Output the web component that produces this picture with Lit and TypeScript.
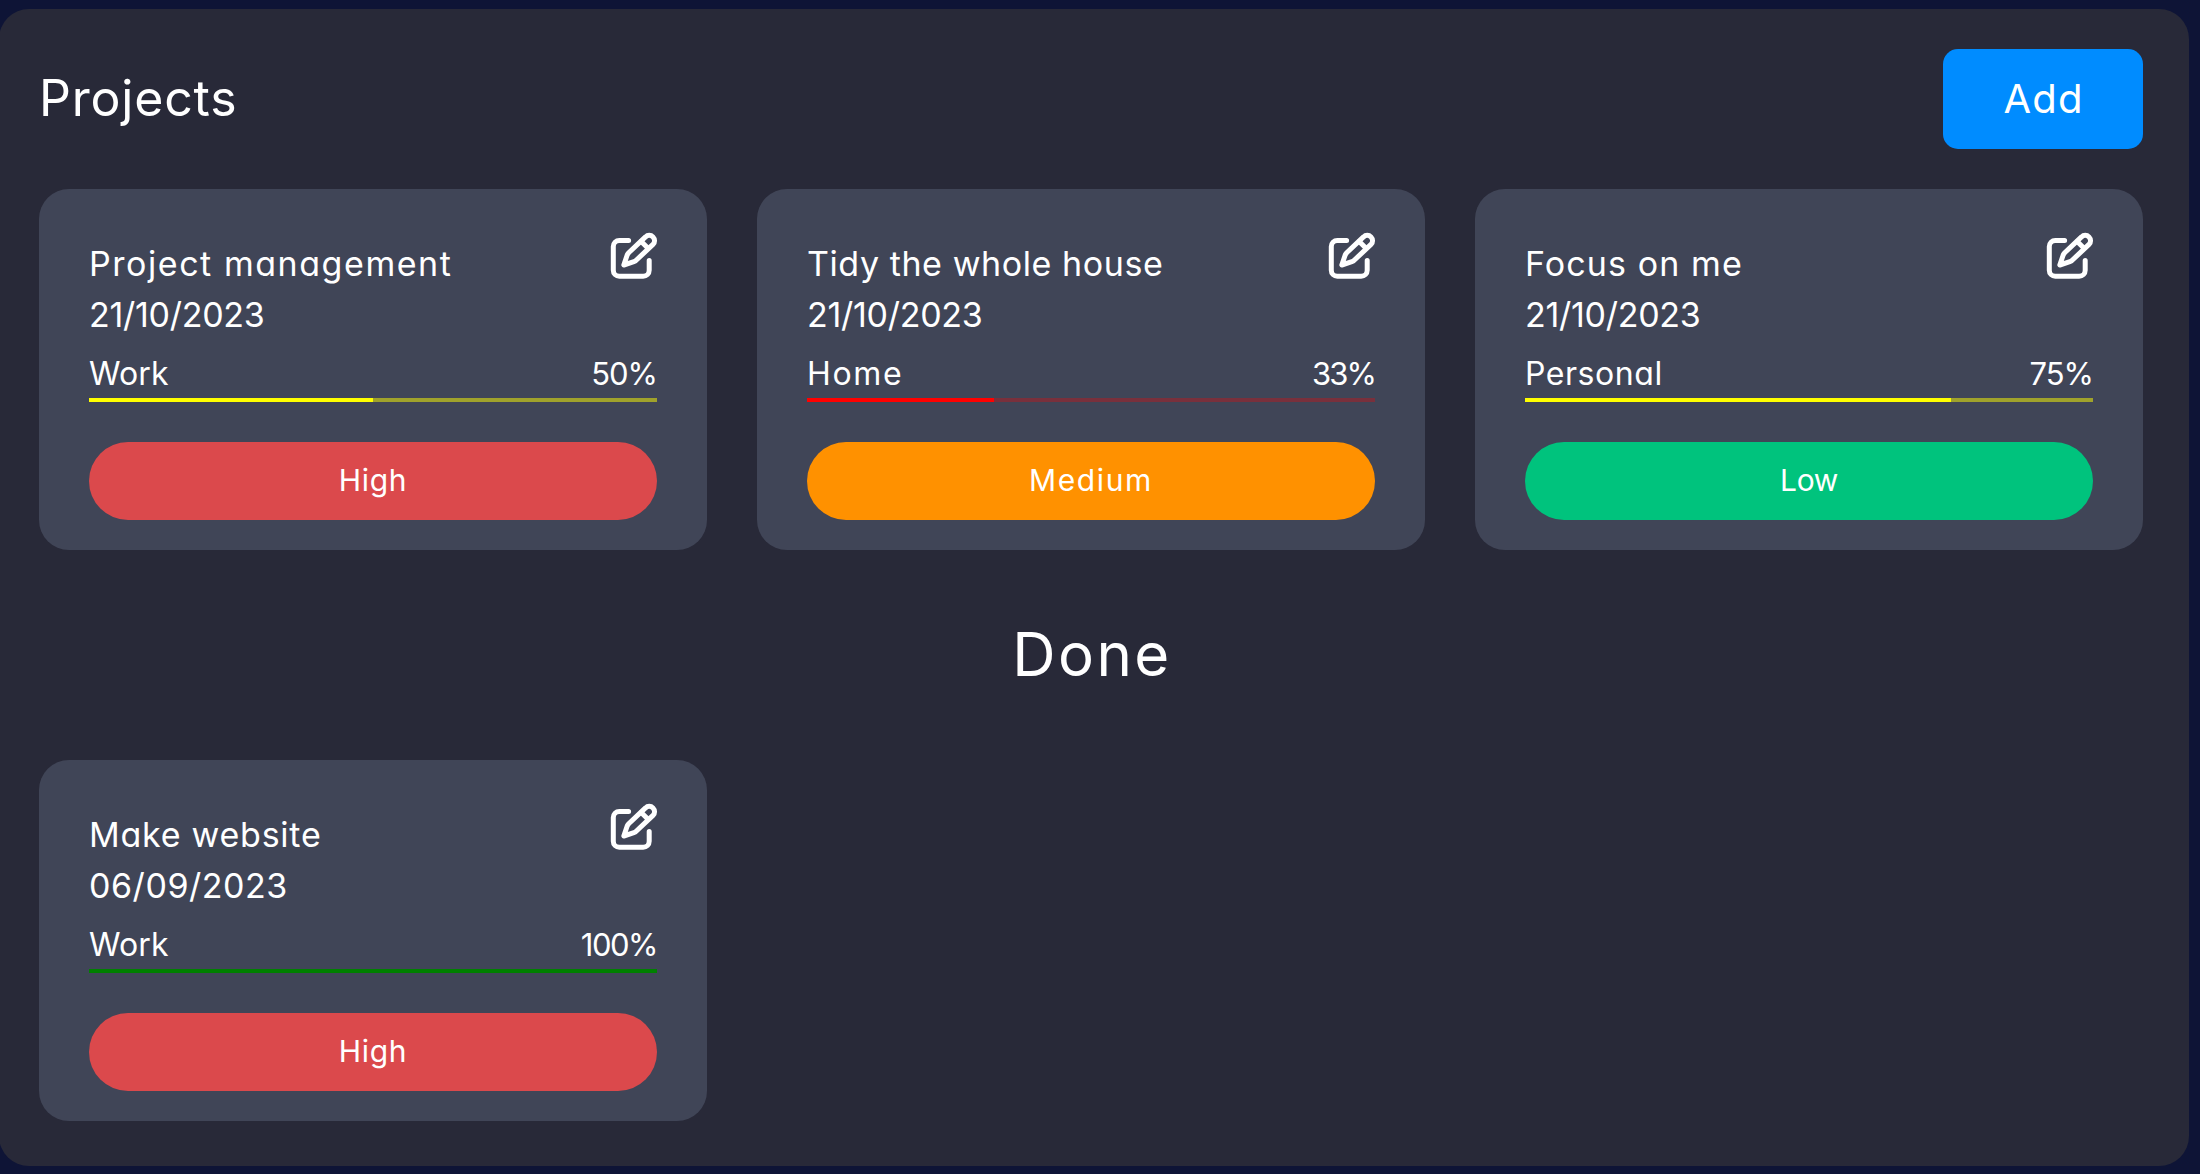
import { LitElement, html, css } from 'lit';
import { customElement, property } from 'lit/decorators.js';
import { classMap } from 'lit/directives/class-map.js';
import { styleMap } from 'lit/directives/style-map.js';

/** A string with the letter spacing (px) it is set in. */
interface Label {
  text: string;
  tracking: number;
}

interface Project {
  title: Label;
  date: Label;
  category: Label;
  progress: number;
  progressTracking: number;
  priority: 'High' | 'Medium' | 'Low';
}

const label = (text: string, tracking: number): Label => ({ text, tracking });

const WORK = label('Work', 0.1);
const OCTOBER = label('21/10/2023', -0.27);

const ACTIVE: Project[] = [
  {
    title: label('Project management', 1.55),
    date: OCTOBER,
    category: WORK,
    progress: 50,
    progressTracking: -1,
    priority: 'High',
  },
  {
    title: label('Tidy the whole house', 0.58),
    date: OCTOBER,
    category: label('Home', 1.7),
    progress: 33,
    progressTracking: -1.91,
    priority: 'Medium',
  },
  {
    title: label('Focus on me', 1.1),
    date: OCTOBER,
    category: label('Personal', 0.55),
    progress: 75,
    progressTracking: -1.05,
    priority: 'Low',
  },
];

const DONE: Project[] = [
  {
    title: label('Make website', 0.75),
    date: label('06/09/2023', 0.54),
    category: WORK,
    progress: 100,
    progressTracking: -1.5,
    priority: 'High',
  },
];

const tracked = (value: number) => styleMap({ letterSpacing: `${value}px` });

@customElement('project-card')
export class ProjectCard extends LitElement {
  @property({ attribute: false }) project!: Project;

  static styles = css`
    :host {
      display: block;
      box-sizing: border-box;
      height: 361px;
      padding: 44px 50px 30px;
      border-radius: 30px;
      background: #404557;
      color: #fff;
    }
    .top {
      display: flex;
      justify-content: space-between;
      align-items: flex-start;
      height: 107px;
    }
    .heading {
      padding-top: 5px;
      font-size: 34px;
      line-height: 51px;
      white-space: nowrap;
    }
    .icon {
      display: block;
      width: 46px;
      height: 46px;
      overflow: visible;
    }
    .meta {
      display: flex;
      justify-content: space-between;
      margin-top: 9px;
      font-size: 32px;
      line-height: 49px;
    }
    .percent {
      font-size: 31px;
    }
    .track,
    .fill {
      height: 4px;
    }
    .track.low { background: rgba(255, 0, 0, 0.3); }
    .track.mid { background: rgba(255, 255, 0, 0.5); }
    .track.full { background: rgba(0, 128, 0, 0.5); }
    .low .fill { background: #f00; }
    .mid .fill { background: #ff0; }
    .full .fill { background: #008000; }
    .priority {
      box-sizing: border-box;
      height: 78px;
      margin-top: 40px;
      border-radius: 39px;
      text-align: center;
      font-size: 30px;
      line-height: 76px;
    }
    .high {
      background: #db494c;
      letter-spacing: 0.7px;
    }
    .medium {
      background: #ff9100;
      letter-spacing: 1.6px;
    }
    .minor {
      background: #00c37d;
      letter-spacing: -0.4px;
    }
  `;

  render() {
    const p = this.project;
    return html`
      <div class="top">
        <div class="heading">
          <div style=${tracked(p.title.tracking)}>${p.title.text}</div>
          <div style=${tracked(p.date.tracking)}>${p.date.text}</div>
        </div>
        <svg class="icon" viewBox="0 0 46 46" fill="none" stroke="#fff" stroke-width="5" stroke-linecap="round" stroke-linejoin="round">
          <path d="M17.600 7.400H8.300a6 6 0 0 0-6 6V37.200a6 6 0 0 0 6 6H32.200a6 6 0 0 0 6-6V27.600" />
          <path d="M12.800 32L16.200 22Q16.700 20.700 17.700 19.700L34.500 3.900a5.300 5.300 0 0 1 7.500 7.500L25.200 27.300Q24.200 28.300 22.900 28.700Z" />
          <path d="M30.200 8.400L36.800 15" />
        </svg>
      </div>
      <div class="meta">
        <span style=${tracked(p.category.tracking)}>${p.category.text}</span>
        <span class="percent" style=${tracked(p.progressTracking)}>${p.progress}%</span>
      </div>
      <div
        class=${classMap({
          track: true,
          low: p.progress < 50,
          mid: p.progress >= 50 && p.progress < 100,
          full: p.progress >= 100,
        })}
      >
        <div class="fill" style=${styleMap({ width: `${p.progress}%` })}></div>
      </div>
      <div
        class=${classMap({
          priority: true,
          high: p.priority === 'High',
          medium: p.priority === 'Medium',
          minor: p.priority === 'Low',
        })}
      >${p.priority}</div>
    `;
  }
}

@customElement('app-root')
export class AppRoot extends LitElement {
  static styles = css`
    :host {
      display: block;
      box-sizing: border-box;
      height: 1174px;
      padding: 9px 11px 8px 0;
      overflow: hidden;
      background: #0e1436;
      color: #fff;
      font-family: Inter, 'Liberation Sans', sans-serif;
      font-feature-settings: 'cv11';
    }
    .panel {
      box-sizing: border-box;
      height: 1157px;
      margin-left: -1px;
      padding: 40px 46px 45px 40px;
      border-radius: 30px;
      background: #282938;
    }
    .header {
      display: flex;
      justify-content: space-between;
      height: 140px;
    }
    .title {
      margin: 0;
      font-size: 50px;
      font-weight: 400;
      line-height: 98px;
      letter-spacing: 0.8px;
    }
    .add {
      box-sizing: border-box;
      width: 200px;
      height: 100px;
      padding: 0 0 1px 1px;
      border: 0;
      border-radius: 15px;
      background: #008cff;
      color: inherit;
      font: inherit;
      font-feature-settings: inherit;
      font-size: 40px;
      letter-spacing: 1.2px;
    }
    .grid {
      display: grid;
      grid-template-columns: repeat(3, 668px);
      gap: 50px;
    }
    .done {
      margin: 0;
      padding: 0 0 2px 2px;
      text-align: center;
      font-size: 60px;
      font-weight: 400;
      line-height: 208px;
      letter-spacing: 2.4px;
    }
  `;

  private cards(projects: Project[]) {
    return html`<div class="grid">
      ${projects.map((p) => html`<project-card .project=${p}></project-card>`)}
    </div>`;
  }

  render() {
    return html`
      <main class="panel">
        <header class="header">
          <h1 class="title">Projects</h1>
          <button class="add">Add</button>
        </header>
        ${this.cards(ACTIVE)}
        <h2 class="done">Done</h2>
        ${this.cards(DONE)}
      </main>
    `;
  }
}
